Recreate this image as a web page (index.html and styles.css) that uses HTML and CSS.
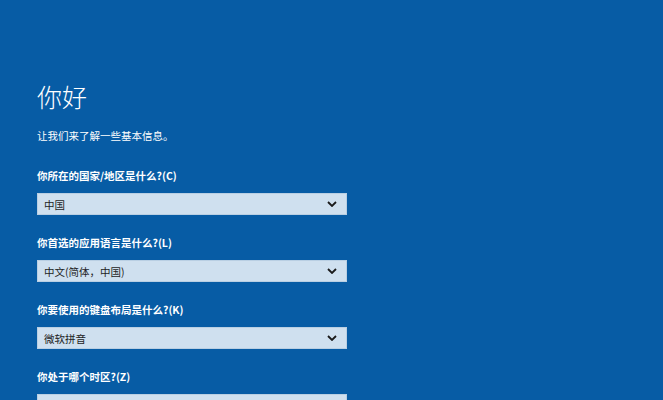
FILE: index.html
```html
<!DOCTYPE html>
<html lang="zh-CN">
<head>
<meta charset="utf-8">
<title>你好</title>
<link rel="stylesheet" href="styles.css">
</head>
<body>
<main class="page">
  <h1 class="title">你好</h1>
  <p class="intro">让我们来了解一些基本信息。</p>

  <section class="field">
    <div class="label">你所在的国家/地区是什么?(C)</div>
    <div class="select"><span class="value">中国</span><svg class="chev" viewBox="0 0 10 6" width="10" height="6"><path d="M1 1 L5 5 L9 1" fill="none" stroke="#1a1a1a" stroke-width="1.8"/></svg></div>
  </section>

  <section class="field">
    <div class="label">你首选的应用语言是什么?(L)</div>
    <div class="select"><span class="value">中文(简体，中国)</span><svg class="chev" viewBox="0 0 10 6" width="10" height="6"><path d="M1 1 L5 5 L9 1" fill="none" stroke="#1a1a1a" stroke-width="1.8"/></svg></div>
  </section>

  <section class="field">
    <div class="label">你要使用的键盘布局是什么?(K)</div>
    <div class="select"><span class="value">微软拼音</span><svg class="chev" viewBox="0 0 10 6" width="10" height="6"><path d="M1 1 L5 5 L9 1" fill="none" stroke="#1a1a1a" stroke-width="1.8"/></svg></div>
  </section>

  <section class="field">
    <div class="label">你处于哪个时区?(Z)</div>
    <div class="select"><span class="value"></span></div>
  </section>
</main>
</body>
</html>
```
FILE: styles.css
```css
html, body {
  margin: 0;
  padding: 0;
  height: 100%;
  overflow: hidden;
}
body {
  background: #075ca5;
  color: #ffffff;
  font-family: "Noto Sans CJK SC", "Noto Sans", "Liberation Sans", sans-serif;
}
.page {
  padding: 78px 0 0 37px;
  width: 310px;
}
.title {
  margin: 0;
  font-size: 25px;
  line-height: 36px;
  font-weight: 300;
}
.intro {
  margin: 14px 0 0;
  font-size: 10.5px;
  line-height: 16px;
}
.field {
  margin-top: 24px;
}
.field + .field {
  margin-top: 20px;
}
.label {
  font-size: 10.5px;
  line-height: 16px;
  font-weight: 700;
  margin-bottom: 9px;
}
.select {
  height: 22px;
  box-sizing: border-box;
  background: #cfe0ef;
  border: 1px solid #b9cfe3;
  display: flex;
  align-items: center;
  justify-content: space-between;
  padding: 0 9px 0 6px;
  color: #1e1e1e;
  font-size: 10.5px;
}
.chev {
  display: block;
}
```
